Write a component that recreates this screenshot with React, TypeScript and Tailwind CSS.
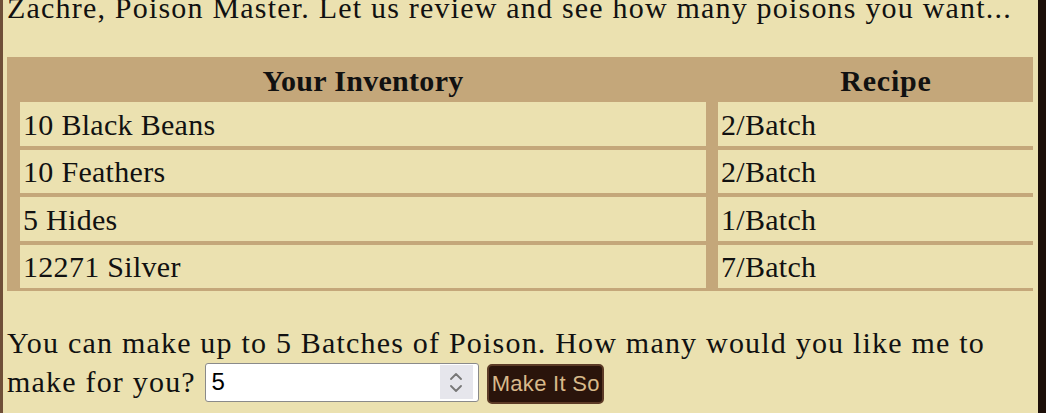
const rows = [
  { item: "10 Black Beans", recipe: "2/Batch", h: "h-[44px]" },
  { item: "10 Feathers", recipe: "2/Batch", h: "h-[43px]" },
  { item: "5 Hides", recipe: "1/Batch", h: "h-[44px]" },
  { item: "12271 Silver", recipe: "7/Batch", h: "h-[43px]" },
];

function Spinner() {
  return (
    <div className="mr-[5px] flex h-[34px] w-[33px] shrink-0 flex-col items-center justify-center gap-[5px] bg-[#e6e6ec]">
      <svg width="12" height="7" viewBox="0 0 12 7" fill="none">
        <path d="M1 6 L6 1 L11 6" stroke="#777" strokeWidth="1.8" strokeLinecap="round" strokeLinejoin="round" />
      </svg>
      <svg width="12" height="7" viewBox="0 0 12 7" fill="none">
        <path d="M1 1 L6 6 L11 1" stroke="#777" strokeWidth="1.8" strokeLinecap="round" strokeLinejoin="round" />
      </svg>
    </div>
  );
}

export default function App() {
  return (
    <div className="flex h-[413px] w-[1046px] overflow-hidden bg-[#ebe1b0] font-['Liberation_Serif',serif] text-[#111]">
      <div className="w-[3px] shrink-0 bg-[#6f4f38]" />

      <div className="min-w-0 flex-1 overflow-hidden pl-[4px]">
        {/* Intro line, page is scrolled a bit */}
        <p className="-mt-[10px] whitespace-nowrap text-[30px] leading-[36px] tracking-[1.2px]">
          Zachre, Poison Master. Let us review and see how many poisons you want...
        </p>

        {/* Inventory table */}
        <div className="mt-[31px] w-[1060px] bg-[#c4a77a] px-[13px] pb-[3px]">
          <div className="grid grid-cols-[686px_336px] gap-x-[12px] gap-y-[4px] text-[30px] tracking-[0.3px]">
            <div className="flex h-[41px] items-center justify-center pt-[6px] font-bold">Your Inventory</div>
            <div className="flex h-[41px] items-center justify-center pt-[6px] font-bold tracking-[0.8px]">Recipe</div>
            {rows.map((r) => [
              <div key={r.item} className={`flex ${r.h} items-center bg-[#ebe1b0] pl-[3px]`}>
                {r.item}
              </div>,
              <div key={r.item + "-r"} className={`flex ${r.h} items-center bg-[#ebe1b0] pl-[3px]`}>
                {r.recipe}
              </div>,
            ])}
          </div>
        </div>

        {/* Batch form */}
        <p className="mt-[32px] text-[30px] leading-[39px] tracking-[1.2px]">
          You can make up to 5 Batches of Poison. How many would you like me to make for you?{" "}
          <span className="mb-[6px] inline-flex h-[39px] w-[274px] items-center rounded-[3px] border border-[#8a8a8a] bg-white align-middle tracking-normal">
            <input
              type="text"
              defaultValue="5"
              className="h-full min-w-0 flex-1 bg-transparent pl-[6px] font-['Liberation_Sans',sans-serif] text-[24px] text-black outline-none"
            />
            <Spinner />
          </span>{" "}
          <button className="mb-[3px] inline-flex h-[40px] w-[117px] items-center justify-center rounded-[5px] border-2 border-[#5c3b27] bg-[#2a140b] align-middle font-['Liberation_Sans',sans-serif] text-[22px] leading-none tracking-[0.3px] text-[#d8b98a]">
            Make It So
          </button>
        </p>
      </div>

      <div className="w-[5px] shrink-0" />
      <div className="w-[8px] shrink-0 bg-[#1c0f09]" />
    </div>
  );
}
